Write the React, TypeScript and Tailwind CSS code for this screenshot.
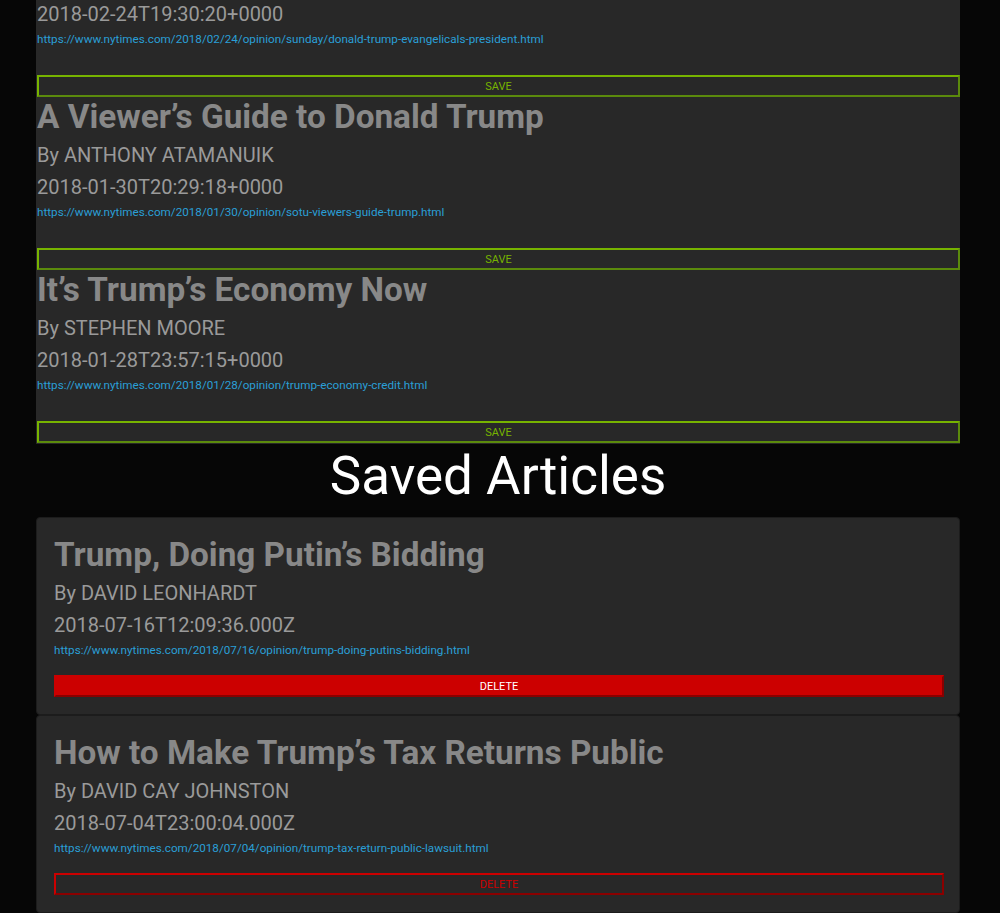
import React from "react";

type Article = { title: string; by: string; date: string; url: string };

const top: Article[] = [
  {
    title: "A Viewer\u2019s Guide to Donald Trump",
    by: "By ANTHONY ATAMANUIK",
    date: "2018-01-30T20:29:18+0000",
    url: "https://www.nytimes.com/2018/01/30/opinion/sotu-viewers-guide-trump.html",
  },
  {
    title: "It\u2019s Trump\u2019s Economy Now",
    by: "By STEPHEN MOORE",
    date: "2018-01-28T23:57:15+0000",
    url: "https://www.nytimes.com/2018/01/28/opinion/trump-economy-credit.html",
  },
];

const saved: Article[] = [
  {
    title: "Trump, Doing Putin\u2019s Bidding",
    by: "By DAVID LEONHARDT",
    date: "2018-07-16T12:09:36.000Z",
    url: "https://www.nytimes.com/2018/07/16/opinion/trump-doing-putins-bidding.html",
  },
  {
    title: "How to Make Trump\u2019s Tax Returns Public",
    by: "By DAVID CAY JOHNSTON",
    date: "2018-07-04T23:00:04.000Z",
    url: "https://www.nytimes.com/2018/07/04/opinion/trump-tax-return-public-lawsuit.html",
  },
];

function Url({ url }: { url: string }) {
  return <div className="text-[11.7px] leading-[16px] text-[#2a9fd6] mt-[5px] whitespace-nowrap">{url}</div>;
}

function Body({ a }: { a: Article }) {
  return (
    <>
      <div className="text-[33.3px] leading-[38px] font-bold text-[#888888] whitespace-nowrap">{a.title}</div>
      <div className="text-[20px] leading-[24px] text-[#9a9a9a] mt-[7px]">{a.by}</div>
      <div className="text-[20px] leading-[24px] text-[#9a9a9a] mt-[8px]">{a.date}</div>
      <Url url={a.url} />
    </>
  );
}

function SaveButton() {
  return (
    <button className="mt-[28px] h-[22px] w-[923px] border-2 border-t-[#77b300] border-l-[#77b300] border-b-[#5b8a0c] border-r-[#5b8a0c] text-[#77b300] text-[11px] leading-none uppercase bg-transparent">
      Save
    </button>
  );
}

export default function App() {
  return (
    <div
      className="w-[1000px] h-[913px] overflow-hidden bg-[#060606]"
      style={{ fontFamily: "Roboto, 'Liberation Sans', sans-serif" }}
    >
      <div className="ml-[36px] w-[924px]">
        <div className="bg-[#282828] pl-px pb-px pt-[2px] flex flex-col">
          <div className="text-[20px] leading-[24px] text-[#9a9a9a]">2018-02-24T19:30:20+0000</div>
          <Url url="https://www.nytimes.com/2018/02/24/opinion/sunday/donald-trump-evangelicals-president.html" />
          <SaveButton />
        </div>
        {top.map((a, i) => (
          <div key={i} className="bg-[#282828] pl-px pb-px flex flex-col">
            <Body a={a} />
            <SaveButton />
          </div>
        ))}
        <h1 className="mt-[3px] mb-[12px] text-center text-white text-[53px] leading-[58px] font-normal">
          Saved Articles
        </h1>
        {saved.map((a, i) => (
          <div
            key={i}
            className="bg-[#282828] rounded-[4px] border border-[#1c1c1c] pt-[18px] pb-[17px] pl-[17px] pr-[15px] flex flex-col"
          >
            <Body a={a} />
            {i === 0 ? (
              <button className="mt-[17px] h-[22px] w-full border-2 border-t-[#cc0000] border-l-[#cc0000] border-b-[#8a0000] border-r-[#8a0000] bg-[#cc0000] text-white text-[11px] leading-none uppercase">
                Delete
              </button>
            ) : (
              <button className="mt-[17px] h-[22px] w-full border-2 border-t-[#cc0000] border-l-[#cc0000] border-b-[#8a0000] border-r-[#8a0000] bg-transparent text-[#cc0000] text-[11px] leading-none uppercase">
                Delete
              </button>
            )}
          </div>
        ))}
      </div>
    </div>
  );
}
